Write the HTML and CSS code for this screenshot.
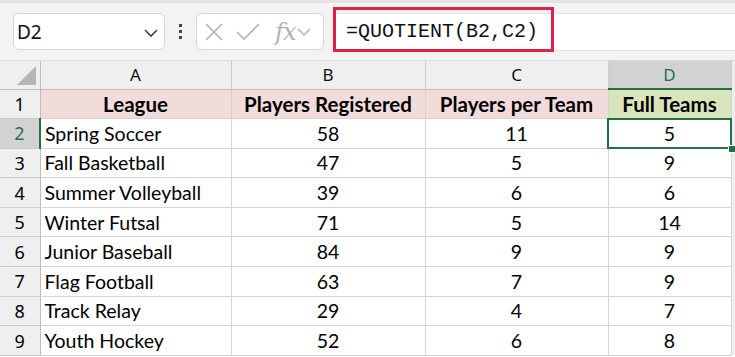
FILE: index.html
```html
<!DOCTYPE html>
<html lang="en">
<head>
    <meta charset="UTF-8">
    <title>QUOTIENT - Full Teams</title>
    <link rel="stylesheet" href="styles.css">
</head>
<body>
<div class="toolbar">
    <div class="name-box">
        <span>D2</span>
        <svg class="chev" width="16" height="10" viewBox="0 0 16 10"><path d="M2 2 L8 8 L14 2" fill="none" stroke="#444" stroke-width="1.6"/></svg>
    </div>
    <div class="dots"><i></i><i></i><i></i></div>
    <div class="fx-box">
        <svg width="22" height="22" viewBox="0 0 22 22"><path d="M3 3 L19 19 M19 3 L3 19" stroke="#b3b3b3" stroke-width="1.6"/></svg>
        <svg width="26" height="22" viewBox="0 0 26 22"><path d="M2 11 L9 18 L24 3" fill="none" stroke="#b3b3b3" stroke-width="1.6"/></svg>
        <span class="fx">fx</span>
        <svg width="16" height="10" viewBox="0 0 16 10"><path d="M2 2 L8 8 L14 2" fill="none" stroke="#b3b3b3" stroke-width="1.5"/></svg>
    </div>
    <div class="formula">=QUOTIENT(B2,C2)</div>
    <div class="highlight"></div>
</div>

<table class="sheet">
    <colgroup>
        <col class="c-rh"><col class="c-a"><col class="c-b"><col class="c-c"><col class="c-d"><col class="c-e">
    </colgroup>
    <thead>
    <tr>
        <th class="corner"><span class="tri"></span></th>
        <th>A</th><th>B</th><th>C</th><th class="sel-col">D</th><th class="rest"></th>
    </tr>
    </thead>
    <tbody>
    <tr class="head-row">
        <td class="rh">1</td>
        <td class="hd">League</td><td class="hd">Players Registered</td><td class="hd">Players per Team</td><td class="hd green">Full Teams</td><td class="rest"></td>
    </tr>
    <tr>
        <td class="rh sel-row">2</td>
        <td>Spring Soccer</td><td class="num">58</td><td class="num">11</td><td class="num active">5<span class="handle"></span></td><td class="rest"></td>
    </tr>
    <tr><td class="rh">3</td><td>Fall Basketball</td><td class="num">47</td><td class="num">5</td><td class="num">9</td><td class="rest"></td></tr>
    <tr><td class="rh">4</td><td>Summer Volleyball</td><td class="num">39</td><td class="num">6</td><td class="num">6</td><td class="rest"></td></tr>
    <tr><td class="rh">5</td><td>Winter Futsal</td><td class="num">71</td><td class="num">5</td><td class="num">14</td><td class="rest"></td></tr>
    <tr><td class="rh">6</td><td>Junior Baseball</td><td class="num">84</td><td class="num">9</td><td class="num">9</td><td class="rest"></td></tr>
    <tr><td class="rh">7</td><td>Flag Football</td><td class="num">63</td><td class="num">7</td><td class="num">9</td><td class="rest"></td></tr>
    <tr><td class="rh">8</td><td>Track Relay</td><td class="num">29</td><td class="num">4</td><td class="num">7</td><td class="rest"></td></tr>
    <tr><td class="rh">9</td><td>Youth Hockey</td><td class="num">52</td><td class="num">6</td><td class="num">8</td><td class="rest"></td></tr>
    </tbody>
</table>
</body>
</html>
```

FILE: styles.css
```css
* {
    margin: 0;
    padding: 0;
    box-sizing: border-box;
}
body {
    width: 735px;
    height: 357px;
    overflow: hidden;
    background: #ffffff;
    font-family: 'Lato', 'Liberation Sans', sans-serif;
    color: #000;
}

/* formula bar strip */
.toolbar {
    position: relative;
    height: 61px;
    background: #f3f3f3;
    border-top: 3px solid #e3e3e3;
    border-bottom: 1px solid #dadada;
    display: flex;
    align-items: center;
    padding: 0 0 0 13px;
}
.name-box {
    width: 152px;
    height: 37px;
    background: #fff;
    border: 1px solid #d6d6d6;
    border-radius: 6px;
    display: flex;
    align-items: center;
    justify-content: space-between;
    padding: 0 5px 0 3px;
    font-family: 'Noto Sans', sans-serif;
    font-size: 19px;
    color: #111;
}
.name-box .chev {
    margin-top: 2px;
}
.dots {
    width: 31px;
    display: flex;
    flex-direction: column;
    align-items: center;
    gap: 3px;
}
.dots i {
    width: 3px;
    height: 3px;
    background: #444;
}
.fx-box {
    width: 128px;
    height: 37px;
    background: #fff;
    border: 1px solid #d6d6d6;
    border-radius: 6px;
    display: flex;
    align-items: center;
    padding: 0 4px 0 6px;
    gap: 10px;
}
.fx-box .fx {
    font-family: 'DejaVu Serif', serif;
    font-style: italic;
    font-size: 24px;
    line-height: 1;
    color: #b3b3b3;
    margin-left: 4px;
    margin-right: -9px;
    letter-spacing: -1px;
}
.formula {
    margin-left: 9px;
    flex: 1;
    height: 38px;
    background: #fff;
    border-top: 1px solid #e2e2e2;
    border-bottom: 1px solid #e2e2e2;
    font-family: 'Liberation Mono', monospace;
    font-size: 20px;
    line-height: 36px;
    padding-left: 13px;
    color: #111;
}
.highlight {
    position: absolute;
    left: 333px;
    top: 4px;
    width: 221px;
    height: 45px;
    border: 3px solid #e0204a;
}

/* grid */
.sheet {
    border-collapse: collapse;
    table-layout: fixed;
    width: 735px;
    font-size: 19.5px;
}
.c-rh { width: 40px; }
.c-a { width: 191px; }
.c-b { width: 194px; }
.c-c { width: 183px; }
.c-d { width: 123px; }
.c-e { width: 4px; }
th {
    height: 28px;
    background: #efefef;
    border-right: 1px solid #cbcbcb;
    border-bottom: 1px solid #bdbdbd;
    font-family: 'Noto Sans', sans-serif;
    font-weight: normal;
    font-size: 17px;
    color: #111;
}
th.corner {
    position: relative;
    border-right: 1px solid #bdbdbd;
}
.tri {
    position: absolute;
    right: 4px;
    bottom: 4px;
    width: 0;
    height: 0;
    border-left: 19px solid transparent;
    border-bottom: 19px solid #b5b5b5;
}
th.sel-col {
    background: #d2d2d2;
    color: #217346;
    border-bottom: 2px solid #217346;
}
th.rest, td.rest {
    background: #efefef;
    border: none;
}
td {
    height: 29.6px;
    border-right: 1px solid #d4d4d4;
    border-bottom: 1px solid #d4d4d4;
    padding: 0 4px;
    white-space: nowrap;
    overflow: visible;
}
td.rh {
    background: #efefef;
    text-align: center;
    font-family: 'Noto Sans', sans-serif;
    font-size: 18px;
    padding: 0;
    border-right: 1px solid #bdbdbd;
    border-bottom: 1px solid #cbcbcb;
}
td.sel-row {
    background: #d2d2d2;
    color: #217346;
    border-right: 2px solid #217346;
}
.head-row td.hd {
    background: #f2dcdb;
    font-weight: bold;
    font-size: 20.5px;
    text-align: center;
}
.head-row td.green {
    background: #d8e4bc;
}
td.num {
    text-align: center;
}
td.active {
    position: relative;
    outline: 2px solid #217346;
    outline-offset: -1px;
}
.handle {
    position: absolute;
    right: -5px;
    bottom: -5px;
    width: 8px;
    height: 8px;
    background: #217346;
    border: 1px solid #fff;
    z-index: 2;
}
```
